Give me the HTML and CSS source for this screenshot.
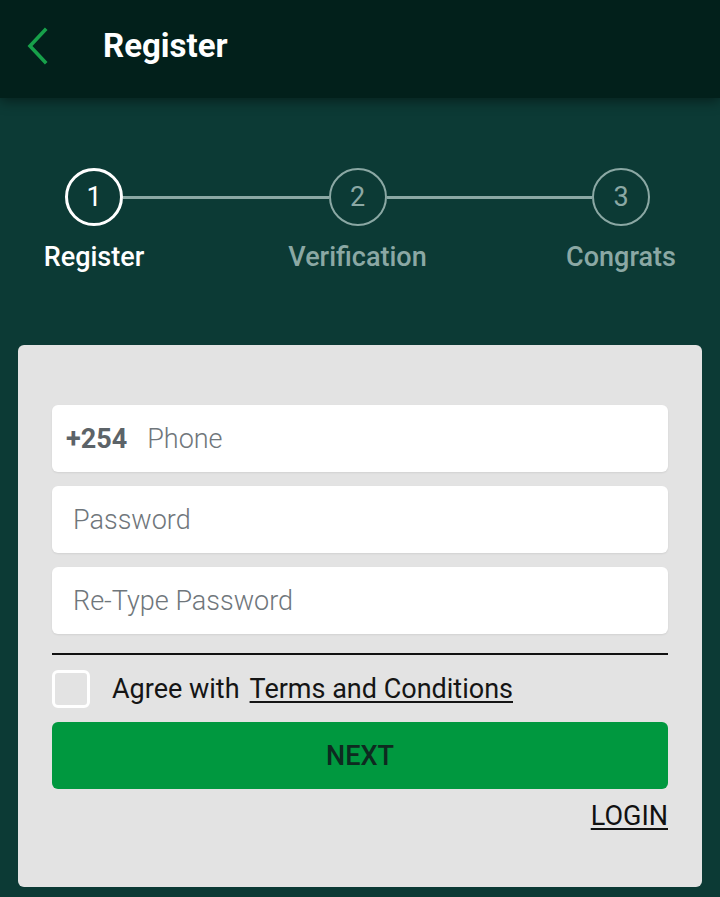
FILE: index.html
```html
<!DOCTYPE html>
<html>
<head>
<meta charset="utf-8">
<link rel="stylesheet" href="styles.css">
</head>
<body>
<header class="topbar">
  <svg class="back" width="24" height="40" viewBox="0 0 24 40"><path d="M20 4 L5 20 L20 36" fill="none" stroke="#17a04a" stroke-width="3.6" stroke-linecap="square"/></svg>
  <h1 class="title">Register</h1>
</header>
<main class="content">
  <div class="steps">
    <div class="circle active">1</div>
    <div class="connector"></div>
    <div class="circle">2</div>
    <div class="connector"></div>
    <div class="circle">3</div>
  </div>
  <div class="labels">
    <span class="label active">Register</span>
    <span class="label">Verification</span>
    <span class="label">Congrats</span>
  </div>
  <section class="card">
    <div class="field">
      <span class="prefix">+254</span>
      <input class="input" type="text" placeholder="Phone">
    </div>
    <div class="field">
      <input class="input" type="password" placeholder="Password">
    </div>
    <div class="field">
      <input class="input" type="password" placeholder="Re-Type Password">
    </div>
    <div class="divider"></div>
    <label class="agree">
      <span class="checkbox"></span>
      <span class="agree-text">Agree with</span>
      <a class="terms">Terms and Conditions</a>
    </label>
    <button class="next">NEXT</button>
    <div class="login-row"><a class="login">LOGIN</a></div>
  </section>
</main>
</body>
</html>
```
FILE: styles.css
```css
html, body {
  margin: 0;
  padding: 0;
}
body {
  width: 720px;
  height: 897px;
  overflow: hidden;
  background: #0c3a35;
  font-family: Roboto, "Noto Sans", "Liberation Sans", sans-serif;
}
.topbar {
  height: 98px;
  background: #02201b;
  display: flex;
  align-items: center;
  box-shadow: 0 3px 12px rgba(0, 0, 0, 0.45);
  position: relative;
  z-index: 1;
}
.back {
  margin-left: 25px;
  margin-top: -6px;
}
.title {
  margin: -7px 0 0 54px;
  color: #ffffff;
  font-size: 33px;
  font-weight: 700;
}
.content {
  padding-top: 70px;
}
.steps {
  display: flex;
  align-items: center;
  margin-left: 65px;
  width: 585px;
}
.circle {
  width: 58px;
  height: 58px;
  box-sizing: border-box;
  border-radius: 50%;
  border: 2.5px solid #8ba8a4;
  color: #8ba8a4;
  display: flex;
  align-items: center;
  justify-content: center;
  font-size: 27px;
  flex: none;
}
.circle.active {
  border: 3px solid #ffffff;
  color: #ffffff;
}
.connector {
  flex: 1;
  height: 3px;
  background: #8ba8a4;
}
.labels {
  display: flex;
  justify-content: space-between;
  margin-left: 14px;
  width: 687px;
  margin-top: 14px;
}
.label {
  width: 160px;
  text-align: center;
  font-size: 27px;
  font-weight: 500;
  line-height: 34px;
  color: #8ba8a4;
}
.label.active {
  color: #ffffff;
}
.card {
  margin: 71px 18px 0;
  background: #e3e3e3;
  border-radius: 6px;
  padding: 60px 34px 0;
  height: 482px;
  display: flex;
  flex-direction: column;
}
.field {
  height: 67px;
  background: #ffffff;
  border-radius: 6px;
  display: flex;
  align-items: center;
  padding-left: 21px;
  margin-bottom: 14px;
  box-shadow: 0 1px 2px rgba(0, 0, 0, 0.08);
}
.field:first-child {
  padding-left: 14px;
}
.prefix {
  font-size: 27px;
  font-weight: 700;
  color: #5c6368;
  margin-right: 20px;
}
.input {
  border: none;
  outline: none;
  background: transparent;
  font-family: inherit;
  font-size: 27px;
  font-weight: 300;
  color: #333;
  padding: 0;
  flex: 1;
}
.input::placeholder {
  color: #6f767b;
}
.divider {
  height: 2px;
  background: #111111;
  margin-top: 5px;
}
.agree {
  display: flex;
  align-items: center;
  margin-top: 14px;
  height: 39px;
}
.checkbox {
  width: 38px;
  height: 38px;
  box-sizing: border-box;
  border: 3px solid #ffffff;
  border-radius: 6px;
  margin-right: 22px;
}
.agree-text {
  font-size: 27px;
  color: #151515;
  margin-right: 10px;
}
.terms {
  font-size: 27px;
  color: #151515;
  text-decoration: underline;
  text-underline-offset: 3px;
}
.next {
  margin-top: 14px;
  height: 67px;
  border: none;
  border-radius: 6px;
  background: #00983f;
  color: #0e2a20;
  font-family: inherit;
  font-size: 27px;
  font-weight: 500;
  width: 100%;
}
.login-row {
  display: flex;
  justify-content: flex-end;
  margin-top: 11px;
}
.login {
  font-size: 27px;
  color: #111111;
  text-decoration: underline;
  text-underline-offset: 3px;
}
```
